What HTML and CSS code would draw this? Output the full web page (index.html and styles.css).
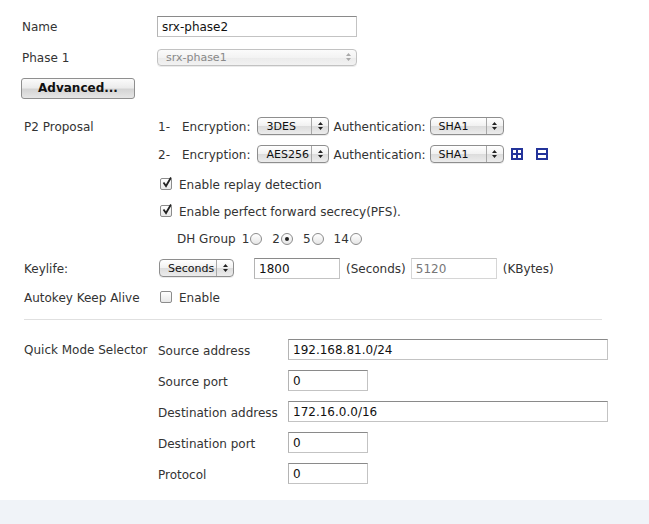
FILE: index.html
```html
<!DOCTYPE html>
<html>
<head>
<meta charset="utf-8">
<link rel="stylesheet" href="styles.css">
</head>
<body>
<div class="page">
  <div class="row top r-name">
    <div class="lbl">Name</div>
    <input class="txt w200" type="text" value="srx-phase2">
  </div>
  <div class="row top r-phase">
    <div class="lbl">Phase 1</div>
    <span class="sel dis w200"><span class="val">srx-phase1</span><span class="arr"><svg width="7" height="10" viewBox="0 0 7 10"><path d="M1 4 L3.5 1 L6 4 Z M1 6 L3.5 9 L6 6 Z" fill="#aaa"/></svg></span></span>
  </div>
  <div class="row r-adv">
    <button class="btn">Advanced...</button>
  </div>

  <div class="row r-p1">
    <div class="lbl">P2 Proposal</div>
    <span class="num">1-</span>
    <span class="t">Encryption:</span>
    <span class="sel w72 ml7"><span class="val">3DES</span><span class="arr div"><svg width="7" height="10" viewBox="0 0 7 10"><path d="M1 4 L3.5 1 L6 4 Z M1 6 L3.5 9 L6 6 Z" fill="#222"/></svg></span></span>
    <span class="t ml4">Authentication:</span>
    <span class="sel w74 ml4"><span class="val">SHA1</span><span class="arr div"><svg width="7" height="10" viewBox="0 0 7 10"><path d="M1 4 L3.5 1 L6 4 Z M1 6 L3.5 9 L6 6 Z" fill="#222"/></svg></span></span>
  </div>
  <div class="row r-p2">
    <div class="lbl"></div>
    <span class="num">2-</span>
    <span class="t">Encryption:</span>
    <span class="sel w72 ml7"><span class="val">AES256</span><span class="arr div"><svg width="7" height="10" viewBox="0 0 7 10"><path d="M1 4 L3.5 1 L6 4 Z M1 6 L3.5 9 L6 6 Z" fill="#222"/></svg></span></span>
    <span class="t ml4">Authentication:</span>
    <span class="sel w74 ml4"><span class="val">SHA1</span><span class="arr div"><svg width="7" height="10" viewBox="0 0 7 10"><path d="M1 4 L3.5 1 L6 4 Z M1 6 L3.5 9 L6 6 Z" fill="#222"/></svg></span></span>
    <svg class="ico plus" width="12" height="12" viewBox="0 0 12 12"><rect x="0" y="0" width="12" height="12" fill="#23339a"/><rect x="2" y="2" width="8" height="8" fill="#fff"/><rect x="5" y="2" width="2" height="8" fill="#23339a"/><rect x="2" y="5" width="8" height="2" fill="#23339a"/></svg>
    <svg class="ico minus" width="12" height="12" viewBox="0 0 12 12"><rect x="0" y="0" width="12" height="12" fill="#23339a"/><rect x="2" y="2" width="8" height="8" fill="#fff"/><rect x="2" y="5" width="8" height="2" fill="#23339a"/></svg>
  </div>
  <div class="row r-cb1">
    <div class="lbl"></div>
    <span class="cb"><svg width="12" height="12" viewBox="0 0 12 12"><path d="M2.5 5.5 L5 9 L10 0.5" fill="none" stroke="#222" stroke-width="1.8"/></svg></span>
    <span class="t">Enable replay detection</span>
  </div>
  <div class="row r-cb2">
    <div class="lbl"></div>
    <span class="cb"><svg width="12" height="12" viewBox="0 0 12 12"><path d="M2.5 5.5 L5 9 L10 0.5" fill="none" stroke="#222" stroke-width="1.8"/></svg></span>
    <span class="t">Enable perfect forward secrecy(PFS).</span>
  </div>
  <div class="row r-dh">
    <div class="lbl"></div>
    <span class="t dh">DH Group</span>
    <span class="t">1</span><span class="rad"></span>
    <span class="t gap">2</span><span class="rad on"></span>
    <span class="t gap">5</span><span class="rad"></span>
    <span class="t gap">14</span><span class="rad"></span>
  </div>
  <div class="row r-key">
    <div class="lbl">Keylife:</div>
    <span class="sel w75 ml1"><span class="val">Seconds</span><span class="arr div"><svg width="7" height="10" viewBox="0 0 7 10"><path d="M1 4 L3.5 1 L6 4 Z M1 6 L3.5 9 L6 6 Z" fill="#222"/></svg></span></span>
    <input class="txt w86 ml20" type="text" value="1800">
    <span class="t ml6">(Seconds)</span>
    <input class="txt w86 ml5 grey" type="text" value="5120">
    <span class="t ml6">(KBytes)</span>
  </div>
  <div class="row r-auto">
    <div class="lbl">Autokey Keep Alive</div>
    <span class="cb"></span>
    <span class="t">Enable</span>
  </div>
  <div class="sep"></div>

  <div class="qms">
    <div class="lbl">Quick Mode Selector</div>
    <div class="qlist">
      <div class="qrow"><span class="qlbl">Source address</span><input class="txt w320" type="text" value="192.168.81.0/24"></div>
      <div class="qrow"><span class="qlbl">Source port</span><input class="txt w80" type="text" value="0"></div>
      <div class="qrow"><span class="qlbl">Destination address</span><input class="txt w320" type="text" value="172.16.0.0/16"></div>
      <div class="qrow"><span class="qlbl">Destination port</span><input class="txt w80" type="text" value="0"></div>
      <div class="qrow"><span class="qlbl">Protocol</span><input class="txt w80" type="text" value="0"></div>
    </div>
  </div>
</div>
<div class="footer"></div>
</body>
</html>
```

FILE: styles.css
```css
html, body {
  margin: 0;
  padding: 0;
  background: #fff;
}
body {
  font-family: "DejaVu Sans", Verdana, sans-serif;
  font-size: 12px;
  color: #333;
  width: 649px;
  height: 524px;
  overflow: hidden;
}
.page {
  padding: 16px 0 0 24px;
  height: 500px;
  box-sizing: border-box;
}
.footer {
  height: 24px;
  background: #f0f3f8;
}
.row {
  display: flex;
  align-items: center;
  height: 20px;
}
.row.top {
  margin-left: -2px;
}
.row.top .lbl {
  width: 135px;
}
.lbl {
  width: 134px;
  flex: none;
  white-space: nowrap;
  padding-top: 2px;
}
.r-phase { margin-top: 11px; }
.r-adv { margin-top: 11px; margin-left: -3px; }
.r-p1 { margin-top: 18px; }
.r-p2 { margin-top: 8px; }
.r-cb1 { margin-top: 10px; }
.r-cb2 { margin-top: 7px; }
.r-dh { margin-top: 7px; }
.r-key { margin-top: 10px; }
.r-auto { margin-top: 9px; }

.t { white-space: nowrap; padding-top: 2px; }
.num { width: 24px; flex: none; padding-top: 2px; }

.txt {
  font-family: "DejaVu Sans", Verdana, sans-serif;
  font-size: 12px;
  color: #111;
  height: 21px;
  box-sizing: border-box;
  border: 1px solid #c3c3c3;
  border-top-color: #8a8a8a;
  border-left-color: #b4b4b4;
  padding: 1px 4px 0;
  margin: 0;
  background: #fff;
  outline: none;
}
.txt.grey { color: #777; border-color: #d6d6d6; border-top-color: #c4c4c4; }
.w200 { width: 200px; }
.w86 { width: 86px; }
.w80 { width: 80px; }
.w320 { width: 320px; }
.w72 { width: 72px; }
.w74 { width: 74px; }
.w75 { width: 75px; }

.ml1 { margin-left: 1px; }
.ml2 { margin-left: 2px; }
.ml4 { margin-left: 4px; }
.ml5 { margin-left: 5px; }
.ml6 { margin-left: 6px; }
.ml7 { margin-left: 7px; }
.ml20 { margin-left: 20px; }

.sel {
  display: inline-flex;
  align-items: stretch;
  height: 18px;
  box-sizing: border-box;
  border: 1px solid #8e8e8e;
  border-radius: 4px;
  background: linear-gradient(#ffffff, #f1f1f1 50%, #dcdcdc 51%, #ececec);
  font-family: "DejaVu Sans", Verdana, sans-serif;
  font-size: 11px;
  color: #111;
  flex: none;
  box-shadow: 0 1px 0 rgba(0,0,0,0.08);
}
.sel .val {
  flex: 1;
  padding-left: 8px;
  line-height: 17px;
  white-space: nowrap;
  overflow: hidden;
}
.sel .arr {
  width: 16px;
  display: flex;
  align-items: center;
  justify-content: center;
}
.sel .arr.div {
  border-left: 1px solid #a8a8a8;
}
.sel.dis {
  border-color: #c2c2c2;
  color: #888;
  background: linear-gradient(#fbfbfb, #f3f3f3 50%, #ebebeb 51%, #f2f2f2);
  height: 17px;
}
.sel.dis .val { line-height: 16px; }

.btn {
  font-family: "DejaVu Sans", Verdana, sans-serif;
  font-size: 12px;
  font-weight: bold;
  color: #111;
  width: 114px;
  height: 21px;
  border: 1px solid #8f8f8f;
  border-radius: 3px;
  background: linear-gradient(#fbfbfb, #ececec 45%, #d4d4d4 55%, #e6e6e6);
  padding: 0;
  margin: 0;
}

.ico { flex: none; }
.ico.plus { margin-left: 7px; }
.ico.minus { margin-left: 13px; }

.cb {
  width: 12px;
  height: 12px;
  box-sizing: border-box;
  border: 1px solid #8c8c8c;
  border-radius: 2px;
  background: linear-gradient(#fff, #e8e8e8);
  margin-left: 2px;
  margin-right: 7px;
  flex: none;
  display: flex;
}
.cb svg {
  margin: -2px 0 0 0;
  flex: none;
}

.dh { margin-left: 19px; margin-right: 6px; }
.gap { margin-left: 10px; }
.rad {
  width: 12px;
  height: 12px;
  box-sizing: border-box;
  border: 1px solid #8c8c8c;
  border-radius: 50%;
  background: linear-gradient(#fff, #e6e6e6);
  margin-left: 1px;
  margin-top: 1px;
  flex: none;
  display: flex;
  align-items: center;
  justify-content: center;
}
.rad.on::after {
  content: "";
  width: 4px;
  height: 4px;
  border-radius: 50%;
  background: #222;
}

.sep {
  margin-top: 12px;
  width: 578px;
  height: 1px;
  background: #e0e0e0;
}

.qms {
  display: flex;
  margin-top: 19px;
}
.qms .lbl {
  height: 21px;
  line-height: 21px;
  padding-top: 1px;
}
.qlist {
  display: flex;
  flex-direction: column;
  gap: 10px;
}
.qrow {
  display: flex;
  align-items: center;
  height: 21px;
}
.qlbl {
  width: 130px;
  flex: none;
  white-space: nowrap;
  padding-top: 2px;
}
```
